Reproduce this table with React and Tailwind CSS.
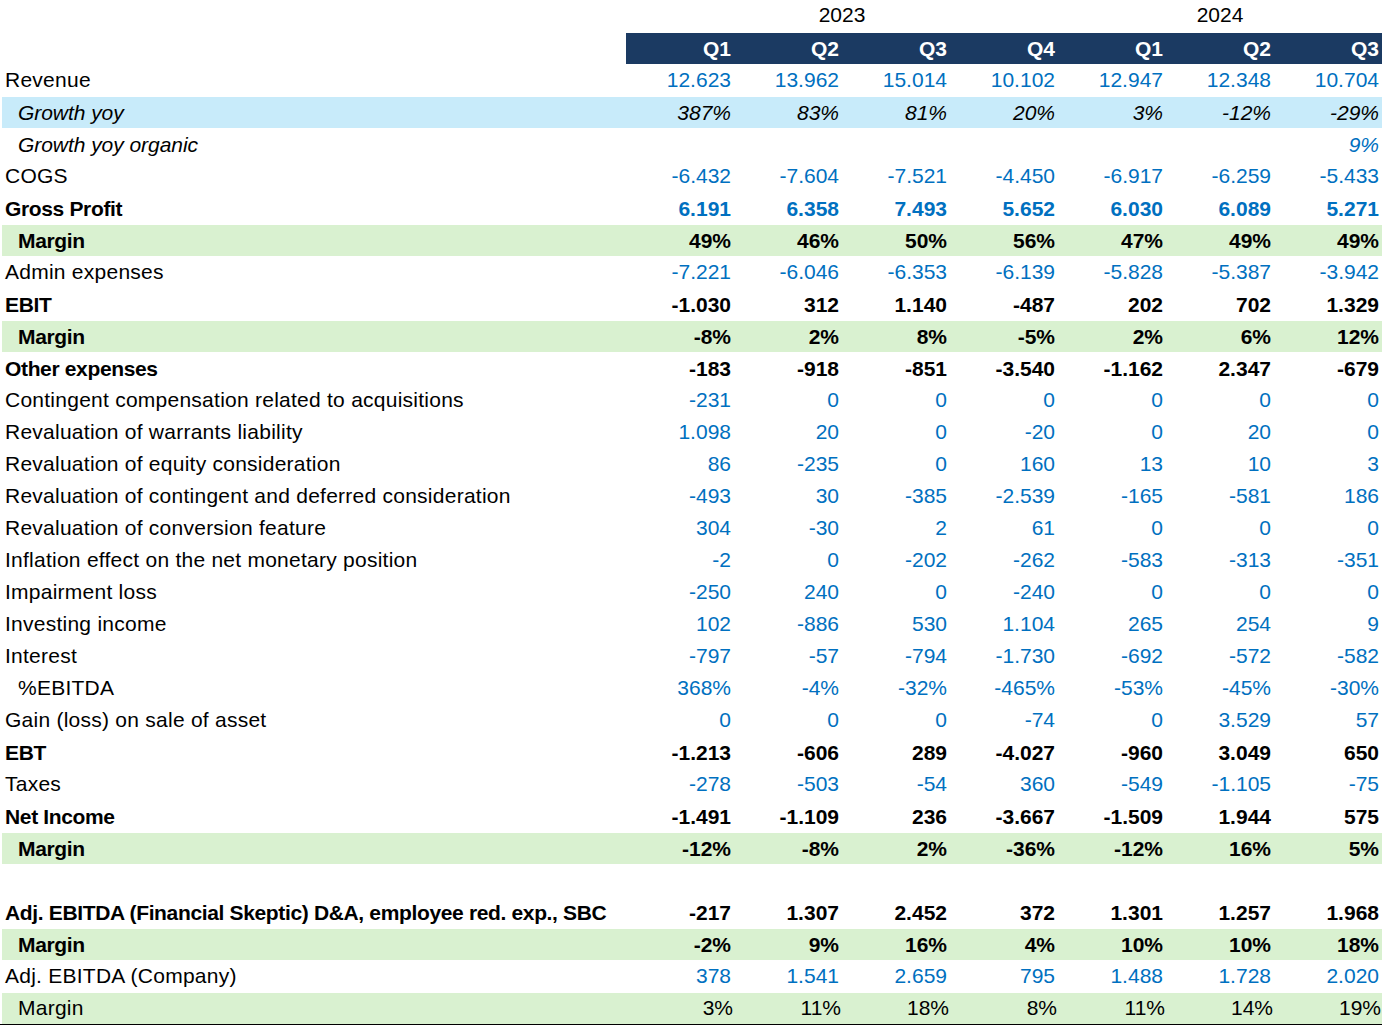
const rows = [
  { label: "Revenue", v: ["12.623", "13.962", "15.014", "10.102", "12.947", "12.348", "10.704"] },
  { label: "Growth yoy", kind: "growth", v: ["387%", "83%", "81%", "20%", "3%", "-12%", "-29%"] },
  { label: "Growth yoy organic", kind: "organic", v: ["", "", "", "", "", "", "9%"] },
  { label: "COGS", v: ["-6.432", "-7.604", "-7.521", "-4.450", "-6.917", "-6.259", "-5.433"] },
  { label: "Gross Profit", kind: "boldBlue", v: ["6.191", "6.358", "7.493", "5.652", "6.030", "6.089", "5.271"] },
  { label: "Margin", kind: "margin", v: ["49%", "46%", "50%", "56%", "47%", "49%", "49%"] },
  { label: "Admin expenses", v: ["-7.221", "-6.046", "-6.353", "-6.139", "-5.828", "-5.387", "-3.942"] },
  { label: "EBIT", kind: "bold", v: ["-1.030", "312", "1.140", "-487", "202", "702", "1.329"] },
  { label: "Margin", kind: "margin", v: ["-8%", "2%", "8%", "-5%", "2%", "6%", "12%"] },
  { label: "Other expenses", kind: "bold", v: ["-183", "-918", "-851", "-3.540", "-1.162", "2.347", "-679"] },
  { label: "Contingent compensation related to acquisitions", v: ["-231", "0", "0", "0", "0", "0", "0"] },
  { label: "Revaluation of warrants liability", v: ["1.098", "20", "0", "-20", "0", "20", "0"] },
  { label: "Revaluation of equity consideration", v: ["86", "-235", "0", "160", "13", "10", "3"] },
  { label: "Revaluation of contingent and deferred consideration", v: ["-493", "30", "-385", "-2.539", "-165", "-581", "186"] },
  { label: "Revaluation of conversion feature", v: ["304", "-30", "2", "61", "0", "0", "0"] },
  { label: "Inflation effect on the net monetary position", v: ["-2", "0", "-202", "-262", "-583", "-313", "-351"] },
  { label: "Impairment loss", v: ["-250", "240", "0", "-240", "0", "0", "0"] },
  { label: "Investing income", v: ["102", "-886", "530", "1.104", "265", "254", "9"] },
  { label: "Interest", v: ["-797", "-57", "-794", "-1.730", "-692", "-572", "-582"] },
  { label: "%EBITDA", kind: "indent", v: ["368%", "-4%", "-32%", "-465%", "-53%", "-45%", "-30%"] },
  { label: "Gain (loss) on sale of asset", v: ["0", "0", "0", "-74", "0", "3.529", "57"] },
  { label: "EBT", kind: "bold", v: ["-1.213", "-606", "289", "-4.027", "-960", "3.049", "650"] },
  { label: "Taxes", v: ["-278", "-503", "-54", "360", "-549", "-1.105", "-75"] },
  { label: "Net Income", kind: "bold", v: ["-1.491", "-1.109", "236", "-3.667", "-1.509", "1.944", "575"] },
  { label: "Margin", kind: "margin", v: ["-12%", "-8%", "2%", "-36%", "-12%", "16%", "5%"] },
  { label: "", kind: "blank", v: ["", "", "", "", "", "", ""] },
  { label: "Adj. EBITDA (Financial Skeptic) D&A, employee red. exp., SBC", kind: "bold", v: ["-217", "1.307", "2.452", "372", "1.301", "1.257", "1.968"] },
  { label: "Margin", kind: "margin", v: ["-2%", "9%", "16%", "4%", "10%", "10%", "18%"] },
  { label: "Adj. EBITDA (Company)", v: ["378", "1.541", "2.659", "795", "1.488", "1.728", "2.020"] },
  { label: "Margin", kind: "marginPlain", v: ["3%", "11%", "18%", "8%", "11%", "14%", "19%"] },
];

const quarters = ["Q1", "Q2", "Q3", "Q4", "Q1", "Q2", "Q3"];

function rowStyle(kind) {
  switch (kind) {
    case "growth":
      return { bg: "bg-[#c8ebfa]", label: "pl-[16px] italic tracking-[-0.05px]", val: "italic text-black" };
    case "organic":
      return { bg: "", label: "pl-[16px] italic tracking-[-0.05px]", val: "italic text-[#0070c0]" };
    case "boldBlue":
      return { bg: "", label: "pl-[3px] font-bold tracking-[-0.35px]", val: "font-bold text-[#0070c0]" };
    case "margin":
      return { bg: "bg-[#d9f1d0]", label: "pl-[16px] font-bold tracking-[-0.35px]", val: "font-bold text-black" };
    case "marginPlain":
      return { bg: "bg-[#d9f1d0]", label: "pl-[16px] tracking-[0.25px] -translate-y-px", val: "text-black pr-px -translate-y-px" };
    case "bold":
      return { bg: "", label: "pl-[3px] font-bold tracking-[-0.35px]", val: "font-bold text-black" };
    case "indent":
      return { bg: "", label: "pl-[16px] tracking-[0.25px] -translate-y-px", val: "text-[#0070c0] -translate-y-px" };
    default:
      return { bg: "", label: "pl-[3px] tracking-[0.25px] -translate-y-px", val: "text-[#0070c0] -translate-y-px" };
  }
}

export default function App() {
  return (
    <div className="w-[1384px] h-[1027px] bg-white text-black font-['Liberation_Sans',Arial,sans-serif] text-[21px] leading-none">
      <div className="w-[1382px] border-b border-black">
        {/* year header */}
        <div className="grid grid-cols-[626px_432px_324px] h-[33px] pt-[4px]">
          <div />
          <div className="text-center">2023</div>
          <div className="text-center">2024</div>
        </div>
        {/* quarter bar */}
        <div className="grid grid-cols-[626px_repeat(7,108px)] h-[31px]">
          <div />
          {quarters.map((q, i) => (
            <div key={i} className="bg-[#1b3a62] text-white font-bold flex items-center justify-end pr-[3px]">
              {q}
            </div>
          ))}
        </div>
        {rows.map((r, i) => {
          const s = rowStyle(r.kind);
          return (
            <div key={i} className="pl-[2px] h-8 pt-px">
              <div className={`grid grid-cols-[624px_repeat(7,108px)] h-full items-center ${s.bg}`}>
                <div className={`whitespace-nowrap ${s.label}`}>{r.label}</div>
                {r.v.map((v, j) => (
                  <div key={j} className={`text-right pr-[3px] ${s.val}`}>
                    {v}
                  </div>
                ))}
              </div>
            </div>
          );
        })}
      </div>
    </div>
  );
}
